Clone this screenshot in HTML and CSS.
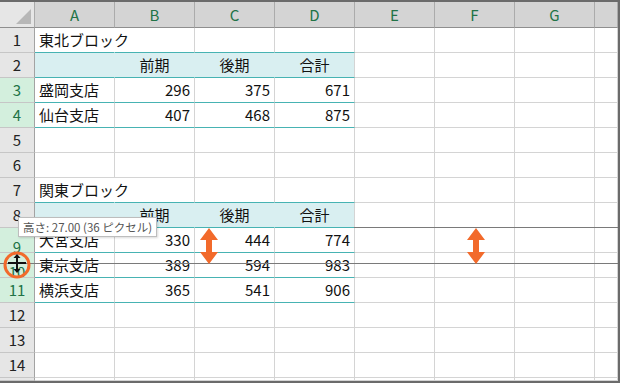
FILE: index.html
```html
<!DOCTYPE html>
<html lang="ja">
<head>
    <meta charset="UTF-8">
    <meta name="viewport" content="width=device-width, initial-scale=1.0">
    <title>行の高さの変更</title>
    <link rel="stylesheet" href="styles.css">
</head>
<body>
    <div class="sheet">
        <div class="grid">
            <!-- column headers -->
            <div class="corner"><span class="tri"></span></div>
            <div class="ch">A</div><div class="ch">B</div><div class="ch">C</div><div class="ch">D</div>
            <div class="ch">E</div><div class="ch">F</div><div class="ch">G</div><div class="ch"></div>

            <!-- 1 -->
            <div class="rh">1</div>
            <div class="c tb spill">東北ブロック</div><div class="c tb"></div><div class="c tb"></div><div class="c tb"></div>
            <div class="c"></div><div class="c"></div><div class="c"></div><div class="c"></div>
            <!-- 2 -->
            <div class="rh">2</div>
            <div class="c hd tb"></div><div class="c hd tb ctr">前期</div><div class="c hd tb ctr">後期</div><div class="c hd last tb ctr">合計</div>
            <div class="c"></div><div class="c"></div><div class="c"></div><div class="c"></div>
            <!-- 3 -->
            <div class="rh sel">3</div>
            <div class="c tb">盛岡支店</div><div class="c tb num">296</div><div class="c tb num">375</div><div class="c tb num">671</div>
            <div class="c"></div><div class="c"></div><div class="c"></div><div class="c"></div>
            <!-- 4 -->
            <div class="rh sel">4</div>
            <div class="c tb">仙台支店</div><div class="c tb num">407</div><div class="c tb num">468</div><div class="c tb num">875</div>
            <div class="c"></div><div class="c"></div><div class="c"></div><div class="c"></div>
            <!-- 5 -->
            <div class="rh">5</div>
            <div class="c"></div><div class="c"></div><div class="c"></div><div class="c"></div>
            <div class="c"></div><div class="c"></div><div class="c"></div><div class="c"></div>
            <!-- 6 -->
            <div class="rh">6</div>
            <div class="c"></div><div class="c"></div><div class="c"></div><div class="c"></div>
            <div class="c"></div><div class="c"></div><div class="c"></div><div class="c"></div>
            <!-- 7 -->
            <div class="rh">7</div>
            <div class="c tb spill">関東ブロック</div><div class="c tb"></div><div class="c tb"></div><div class="c tb"></div>
            <div class="c"></div><div class="c"></div><div class="c"></div><div class="c"></div>
            <!-- 8 -->
            <div class="rh">8</div>
            <div class="c hd tb"></div><div class="c hd tb ctr">前期</div><div class="c hd tb ctr">後期</div><div class="c hd last tb ctr">合計</div>
            <div class="c"></div><div class="c"></div><div class="c"></div><div class="c"></div>
            <!-- 9 -->
            <div class="rh sel shift">9</div>
            <div class="c tb">大宮支店</div><div class="c tb num">330</div><div class="c tb num">444</div><div class="c tb num">774</div>
            <div class="c"></div><div class="c"></div><div class="c"></div><div class="c"></div>
            <!-- 10 -->
            <div class="rh sel shift">10</div>
            <div class="c tb">東京支店</div><div class="c tb num">389</div><div class="c tb num">594</div><div class="c tb num">983</div>
            <div class="c"></div><div class="c"></div><div class="c"></div><div class="c"></div>
            <!-- 11 -->
            <div class="rh sel">11</div>
            <div class="c tb">横浜支店</div><div class="c tb num">365</div><div class="c tb num">541</div><div class="c tb num">906</div>
            <div class="c"></div><div class="c"></div><div class="c"></div><div class="c"></div>
            <!-- 12 -->
            <div class="rh">12</div>
            <div class="c"></div><div class="c"></div><div class="c"></div><div class="c"></div>
            <div class="c"></div><div class="c"></div><div class="c"></div><div class="c"></div>
            <!-- 13 -->
            <div class="rh">13</div>
            <div class="c"></div><div class="c"></div><div class="c"></div><div class="c"></div>
            <div class="c"></div><div class="c"></div><div class="c"></div><div class="c"></div>
            <!-- 14 -->
            <div class="rh">14</div>
            <div class="c"></div><div class="c"></div><div class="c"></div><div class="c"></div>
            <div class="c"></div><div class="c"></div><div class="c"></div><div class="c"></div>
            <!-- 15 (cut off) -->
            <div class="rh"></div>
            <div class="c"></div><div class="c"></div><div class="c"></div><div class="c"></div>
            <div class="c"></div><div class="c"></div><div class="c"></div><div class="c"></div>
        </div>

        <!-- drag preview lines -->
        <div class="drag-line top-line"></div>
        <div class="drag-line bottom-line"></div>

        <div class="tooltip">高さ: 27.00 (36 ピクセル)</div>

        <svg class="cursor-mark" width="28" height="28" viewBox="0 0 28 28">
            <circle cx="14" cy="14" r="12" fill="none" stroke="#f26a2b" stroke-width="3"/>
            <rect x="5" y="11" width="18" height="2" fill="#111"/>
            <rect x="13" y="5" width="2" height="15" fill="#111"/>
            <path d="M14 3 L17.5 7 L10.5 7 Z" fill="#111"/>
            <path d="M14 22 L17.5 18 L10.5 18 Z" fill="#111"/>
        </svg>

        <svg class="arrow arrow-left" width="20" height="36" viewBox="0 0 20 36">
            <path d="M10 0 L19 12 L13 12 L13 24 L19 24 L10 36 L1 24 L7 24 L7 12 L1 12 Z" fill="#f26a2b"/>
        </svg>
        <svg class="arrow arrow-right" width="20" height="36" viewBox="0 0 20 36">
            <path d="M10 0 L19 12 L13 12 L13 24 L19 24 L10 36 L1 24 L7 24 L7 12 L1 12 Z" fill="#f26a2b"/>
        </svg>
    </div>
</body>
</html>
```

FILE: styles.css
```css
body {
    margin: 0;
    background: #fff;
    font-family: "Noto Sans CJK JP", "Noto Sans", sans-serif;
}
.sheet {
    position: relative;
    width: 620px;
    height: 383px;
    box-sizing: border-box;
    border-top: 2px solid #6b6b6b;
    border-right: 2px solid #6b6b6b;
    border-bottom: 2px solid #6b6b6b;
    overflow: hidden;
}
.grid {
    display: grid;
    grid-template-columns: 35px repeat(7, 80px) 23px;
    grid-template-rows: 26px repeat(14, 25px) 3px;
    font-size: 15px;
    color: #111;
}
.grid > div {
    box-sizing: border-box;
    line-height: 24px;
    white-space: nowrap;
    overflow: hidden;
}
.corner {
    position: relative;
    background: #e6e6e6;
    border-right: 1px solid #ababab;
    border-bottom: 1px solid #8f8f8f;
}
.tri {
    position: absolute;
    right: 3px;
    bottom: 3px;
    width: 0;
    height: 0;
    border-left: 15px solid transparent;
    border-bottom: 15px solid #b7b7b7;
}
.ch {
    background: #d4d4d4;
    color: #217346;
    text-align: center;
    line-height: 25px !important;
    border-right: 1px solid #ababab;
    border-bottom: 1px solid #8f8f8f;
}
.rh {
    background: #e6e6e6;
    color: #222;
    text-align: center;
    border-right: 1px solid #a3a3a3;
    border-bottom: 1px solid #c6c6c6;
}
.rh.sel {
    background: #d3efdd;
    color: #217346;
}
/* row numbers pushed down while the row is being dragged */
.rh.shift {
    padding-top: 7px;
}
.c {
    border-right: 1px solid #d4d4d4;
    border-bottom: 1px solid #d4d4d4;
    padding: 0 4px;
}
/* long title text runs on into the empty cell beside it */
.grid > .c.spill {
    overflow: visible;
    border-right-color: #fff;
    position: relative;
    z-index: 1;
}
.c.hd {
    background: #d9eff1;
    border-right-color: #d9eff1;
}
.c.hd.last {
    border-right-color: #d4d4d4;
}
.c.tb {
    border-bottom-color: #47b3b3;
}
.c.num {
    text-align: right;
}
.c.ctr {
    text-align: center;
}
.drag-line {
    position: absolute;
    height: 1px;
    background: #7a7a7a;
    z-index: 2;
}
.top-line {
    top: 225px;
    left: 354px;
    right: 0;
}
.bottom-line {
    top: 261px;
    left: 0;
    right: 0;
}
.tooltip {
    position: absolute;
    z-index: 3;
    left: 18px;
    top: 215px;
    height: 18px;
    padding: 0 4px;
    background: #fff;
    border: 1px solid #bdbdbd;
    box-shadow: 1px 1px 2px rgba(0, 0, 0, 0.15);
    font-size: 11.5px;
    line-height: 18px;
    color: #555;
    white-space: nowrap;
}
.cursor-mark {
    position: absolute;
    z-index: 3;
    left: 3px;
    top: 249px;
}
.arrow {
    position: absolute;
    z-index: 3;
    top: 226px;
}
.arrow-left {
    left: 199px;
}
.arrow-right {
    left: 466px;
}
```
